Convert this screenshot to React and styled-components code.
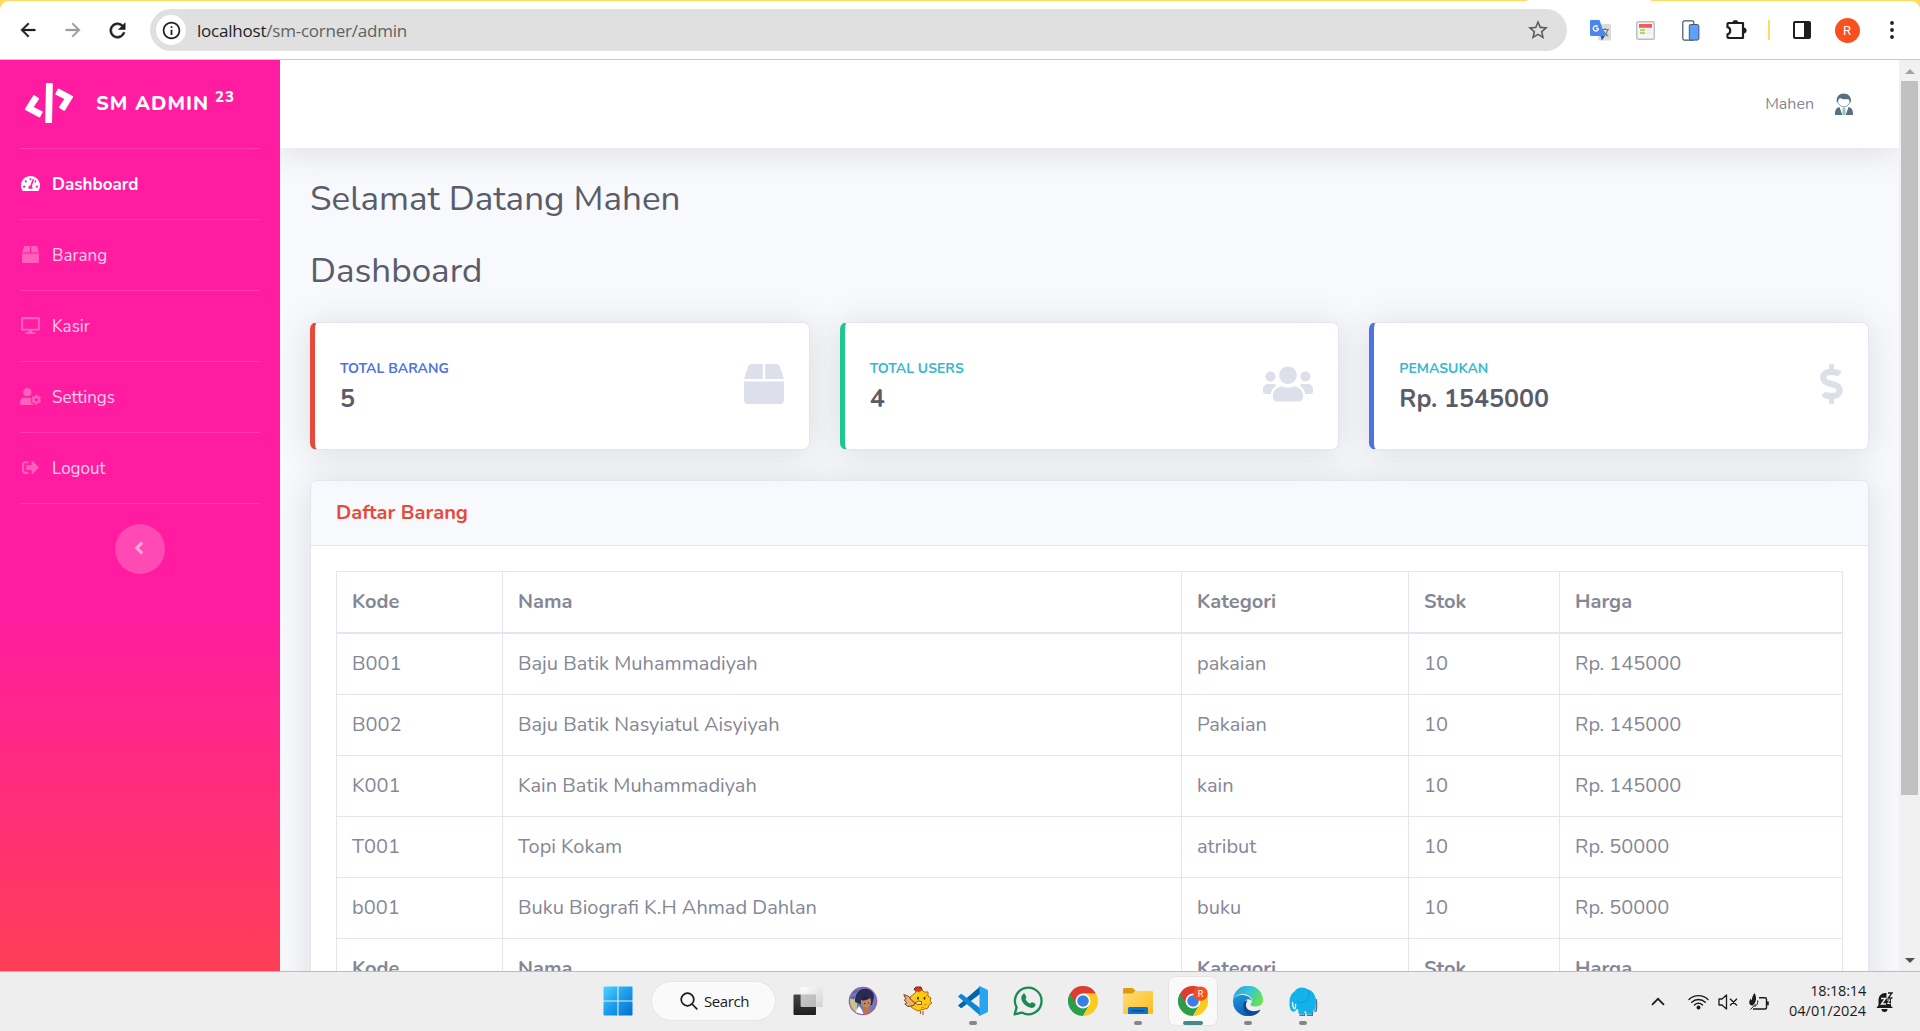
import React from "react";
import styled, { createGlobalStyle } from "styled-components";
import {
  FaTachometerAlt, FaBox, FaDesktop, FaUserCog, FaSignOutAlt, FaAngleLeft,
  FaUsers, FaDollarSign, FaCode,
} from "react-icons/fa";
import { MdArrowBack, MdArrowForward, MdRefresh, MdInfoOutline, MdStarBorder } from "react-icons/md";

const Global = createGlobalStyle`
  *, *::before, *::after { box-sizing: border-box; }
  body { margin: 0; overflow: hidden; background: #fff; }
  svg { display: block; flex: none; }
`;

const Screen = styled.div`
  width: 1920px;
  height: 1031px;
  display: flex;
  flex-direction: column;
  overflow: hidden;
  font-family: Nunito, Lato, "Noto Sans", sans-serif;
  font-size: 20px;
  color: #858796;
`;

/* ---------- Browser toolbar ---------- */
const TabStrip = styled.div`
  height: 60px;
  flex: none;
  background: linear-gradient(90deg, #ffdc5e 0 1527px, #fff 1527px 1651px, #ffdc5e 1651px);
  padding-top: 1px;
`;
const Toolbar = styled.div`
  height: 59px;
  background: #fff;
  border-bottom: 1px solid #c9c9c9;
  border-radius: 9px 9px 0 0;
  display: flex;
  align-items: center;
  padding: 0 5px 0 5px;
`;
const NavButton = styled.div`
  width: 45px;
  display: flex;
  justify-content: center;
  color: ${(p) => (p.$dim ? "#9b9c9e" : "#1f1f1f")};
  svg { stroke: none; }
  path:not([fill="none"]) { stroke: currentColor; stroke-width: ${(p) => p.$bold || 0.3}; }
`;
const Address = styled.div`
  width: 1417px;
  height: 42px;
  margin-left: 10px;
  border-radius: 21px;
  background: #e0e0e0;
  display: flex;
  align-items: center;
  padding: 0 17px 0 6px;
`;
const SiteInfo = styled.div`
  width: 30px;
  height: 30px;
  border-radius: 50%;
  background: #fff;
  color: #1f1f1f;
  display: flex;
  align-items: center;
  justify-content: center;
`;
const Url = styled.div`
  flex: 1;
  margin: 1px 0 0 11px;
  font: 400 17px/24px "Open Sans", "Noto Sans", sans-serif;
  letter-spacing: -0.22px;
  color: #5f6062;
  b { font-weight: 400; color: #1f1f1f; }
`;
const Extensions = styled.div`
  margin-left: 11px;
  display: flex;
  align-items: center;
`;
const ExtensionCell = styled.div`
  width: ${(p) => p.$w || 45}px;
  display: flex;
  justify-content: center;
`;
const Divider = styled.div`
  width: 2px;
  height: 20px;
  background: #ffdc5e;
`;
const Profile = styled.div`
  width: 25px;
  height: 25px;
  border-radius: 50%;
  background: #f8511d;
  color: #fff;
  font: 400 13px/25px Roboto, sans-serif;
  text-align: center;
`;

/* ---------- Page ---------- */
const Viewport = styled.div`
  height: 911px;
  flex: none;
  display: flex;
  overflow: hidden;
`;
const Sidebar = styled.div`
  width: 280px;
  height: 911px;
  flex: none;
  padding: 0 20px;
  background: linear-gradient(180deg, #ff1ca0 0, #ff1ca0 550px, #ff3e57 911px);
  color: #fff;
`;
const Brand = styled.div`
  height: 88px;
  display: flex;
  align-items: center;
  padding-left: 4px;
  svg { transform: rotate(-15deg); margin-top: -3px; }
`;
const BrandText = styled.div`
  margin: -1px 0 0 22px;
  font-weight: 800;
  font-size: 20px;
  letter-spacing: 1px;
  line-height: 30px;
  white-space: nowrap;
  display: flex;
  gap: 6px;
`;
const Sup = styled.span`
  font-size: 15px;
  line-height: 17px;
`;
const NavItem = styled.div`
  height: 71px;
  padding-top: 2px;
  border-top: 1px solid rgba(255, 255, 255, 0.15);
  display: flex;
  align-items: center;
  font-size: 17px;
  line-height: 24px;
  font-weight: ${(p) => (p.$active ? 700 : 400)};
  color: ${(p) => (p.$active ? "#fff" : "rgba(255,255,255,.8)")};
`;
const NavIcon = styled.span`
  width: 21px;
  margin: 0 11px 3px 0;
  display: flex;
  justify-content: center;
  color: ${(p) => (p.$active ? "#fff" : "rgba(255,255,255,.3)")};
`;
const SidebarFoot = styled.div`
  border-top: 1px solid rgba(255, 255, 255, 0.15);
  padding-top: 20px;
  display: flex;
  justify-content: center;
`;
const Toggle = styled.div`
  width: 50px;
  height: 50px;
  border-radius: 50%;
  background: rgba(255, 255, 255, 0.2);
  color: rgba(255, 255, 255, 0.5);
  display: flex;
  align-items: center;
  justify-content: center;
  padding: 0 2px 3px 0;
`;
const Content = styled.div`
  width: 1619px;
  height: 911px;
  flex: none;
  overflow: hidden;
  background: #f8f9fc;
`;
const Topbar = styled.div`
  height: 88px;
  background: #fff;
  box-shadow: 0 3px 35px rgba(58, 59, 69, 0.15);
  display: flex;
  align-items: center;
  justify-content: flex-end;
  padding-right: 46px;
  font-size: 16px;
  line-height: 24px;
`;
const UserName = styled.span`
  margin-right: 21px;
`;
const Main = styled.div`
  padding: 30px 30px 0;
`;
const Heading = styled.h1`
  margin: 0 0 30px;
  font-weight: 400;
  font-size: 35px;
  line-height: 42px;
  color: #5a5c69;
`;
const Cards = styled.div`
  display: grid;
  grid-template-columns: repeat(3, 1fr);
  gap: 30px;
`;
const StatCard = styled.div`
  height: 128px;
  background: #fff;
  border: 1px solid #e3e6f0;
  border-left: 5px solid ${(p) => p.$accent};
  border-radius: 7px;
  box-shadow: 0 3px 35px rgba(58, 59, 69, 0.15);
  display: flex;
  align-items: center;
  justify-content: space-between;
  padding: 0 25px 1px;
  color: #dddfeb;
  svg { width: ${(p) => p.$iconWidth}px; height: 40px; margin-bottom: 3px; }
`;
const StatLabel = styled.div`
  font-size: 14px;
  line-height: 21px;
  margin-bottom: 5px;
  font-weight: 700;
  color: ${(p) => p.$color};
`;
const StatValue = styled.div`
  font-size: 25px;
  line-height: 30px;
  font-weight: 700;
  color: #5a5c69;
`;
const Panel = styled.div`
  margin-top: 30px;
  height: 640px;
  background: #fff;
  border: 1px solid #e3e6f0;
  border-radius: 7px;
  box-shadow: 0 3px 35px rgba(58, 59, 69, 0.15);
`;
const PanelHead = styled.div`
  height: 65px;
  padding: 20px 25px 0;
  background: #f8f9fc;
  border-bottom: 1px solid #e3e6f0;
  border-radius: 6px 6px 0 0;
  font-weight: 700;
  font-size: 20px;
  line-height: 24px;
  color: #e74a3b;
`;
const Table = styled.div`
  margin: 25px 25px 0;
  border-left: 1px solid #e3e6f0;
  border-top: 1px solid #e3e6f0;
`;
const Row = styled.div`
  display: grid;
  grid-template-columns: 166px 679px 227px 151px 1fr;
  height: ${(p) => (p.$head ? 62 : 61)}px;
`;
const Cell = styled.div`
  border-right: 1px solid #e3e6f0;
  border-bottom: ${(p) => (p.$head ? 2 : 1)}px solid #e3e6f0;
  padding: 15px 15px 0;
  line-height: 30px;
  white-space: nowrap;
  font-weight: ${(p) => (p.$strong ? 700 : 400)};
`;
const Scrollbar = styled.div`
  width: 21px;
  background: #f1f1f1;
  display: flex;
  flex-direction: column;
  align-items: center;
  justify-content: space-between;
  padding: 9px 0 8px;
`;
const Thumb = styled.div`
  width: 17px;
  height: 714px;
  margin: 7px 0 auto;
  background: #c1c1c1;
`;
const Arrow = styled.div`
  border: 5px solid transparent;
  border-top-width: ${(p) => (p.$down ? 5 : 0)}px;
  border-bottom-width: ${(p) => (p.$down ? 0 : 5)}px;
  border-top-color: ${(p) => (p.$down ? "#505050" : "transparent")};
  border-bottom-color: ${(p) => (p.$down ? "transparent" : "#a3a3a3")};
`;

/* ---------- Taskbar ---------- */
const Taskbar = styled.div`
  height: 60px;
  flex: none;
  background: #eee;
  border-top: 1px solid #bcbcbf;
  display: flex;
  justify-content: space-between;
  font-family: "Open Sans", "Noto Sans", sans-serif;
  color: #1b1b1b;
`;
const Apps = styled.div`
  margin-left: 590px;
  display: flex;
`;
const AppSlot = styled.div`
  width: 55px;
  display: flex;
  flex-direction: column;
  align-items: center;
  padding-top: 5px;
`;
const Tile = styled.div`
  width: 48px;
  height: 48px;
  border-radius: 6px;
  display: flex;
  flex-direction: column;
  align-items: center;
  padding-top: 9px;
  background: ${(p) => (p.$active ? "#f9f9f9" : "transparent")};
  box-shadow: ${(p) => (p.$active ? "0 0 0 1px #e4e4e4" : "none")};
`;
const Mark = styled.div`
  margin-top: 5px;
  width: ${(p) => p.$w}px;
  height: 4px;
  border-radius: 2px;
  background: ${(p) => p.$color || "#868686"};
`;
const SearchBox = styled.div`
  width: 123px;
  height: 38px;
  margin: 10px 5px 0 7px;
  border-radius: 19px;
  background: #fafafa;
  box-shadow: 0 0 0 1px #e6e6e6;
  display: flex;
  align-items: center;
  padding-left: 28px;
  gap: 6px;
  font-size: 15px;
  line-height: 20px;
  letter-spacing: -0.4px;
`;
const Tray = styled.div`
  display: flex;
  align-items: center;
  padding-right: 26px;
`;
const TrayIcon = styled.div`
  width: ${(p) => p.$w}px;
  display: flex;
  justify-content: center;
`;
const Clock = styled.div`
  width: 87px;
  text-align: right;
  font-size: 14.5px;
  line-height: 20px;
  margin: 0 10px 1px 0;
`;
const ClockLine = styled.div`
  letter-spacing: ${(p) => p.$ls}px;
`;

/* ---------- Icons ---------- */
const TranslateIcon = () => (
  <svg width="21" height="21" viewBox="0 0 21 21">
    <rect x="8" y="4" width="13" height="16.5" rx="1.2" fill="#dcdcdc" />
    <path d="M11.5 9.5h7.5M15.2 8v1.5M17.7 9.5c-.6 3-2.4 5.300-5 6.500M13 10.500c1 2.500 2.800 4.500 5.300 5.500" stroke="#5f7d84" strokeWidth="1.200" fill="none" />
    <path d="M1.200 0h8.300l5.500 16H1.200A1.200 1.200 0 0 1 0 14.800V1.200A1.200 1.200 0 0 1 1.200 0z" fill="#4a86ee" />
    <path d="M10.500 16H15l-3.200 4.500z" fill="#3450b4" />
    <path d="M8.500 8.400H6M8.500 8.400A2.600 2.600 0 1 1 7.700 6.500" stroke="#fff" strokeWidth="1.300" fill="none" />
  </svg>
);
const NotesIcon = () => (
  <svg width="19" height="19" viewBox="0 0 19 19">
    <rect x=".7" y=".7" width="17.600" height="17.600" rx="1.500" fill="#f6f6f6" stroke="#bdbdbd" strokeWidth="1.400" />
    <rect x="3" y="3" width="13" height="3.800" fill="#f4595b" />
    <path d="M4 9h5M4 12h5" stroke="#8fd53c" strokeWidth="1.500" />
    <path d="M10.500 9H15M10.500 12H15" stroke="#e0e0e0" strokeWidth="1.200" />
  </svg>
);
const DevicesIcon = () => (
  <svg width="18" height="21" viewBox="0 0 18 21">
    <rect x=".8" y=".8" width="11" height="19.400" rx="1.800" fill="#fff" stroke="#46546f" strokeWidth="1.200" />
    <rect x="7.300" y="4.500" width="9.600" height="15.600" rx="1.600" fill="#5ca2fb" stroke="#46546f" strokeWidth="1" />
  </svg>
);
const PuzzleIcon = () => (
  <svg width="21" height="21" viewBox="0 0 21 21">
    <path d="M2.500 3H17v15H2.500a1 1 0 0 1-1-1v-2.700c1.700-.3 2.700-1.800 2.700-3.500S3.200 7.500 1.500 7.200V4a1 1 0 0 1 1-1z" fill="none" stroke="#1f1f1f" strokeWidth="2.200" strokeLinejoin="round" />
    <path d="M6.700 3a2.700 2.700 0 0 1 5.400 0zM17.600 7.800a2.700 2.700 0 0 1 0 5.400z" fill="#1f1f1f" stroke="#1f1f1f" strokeWidth=".6" />
  </svg>
);
const PanelIcon = () => (
  <svg width="18" height="18" viewBox="0 0 18 18">
    <rect x="1" y="1" width="16" height="16" rx="1" fill="none" stroke="#1f1f1f" strokeWidth="2" />
    <path d="M11 1h6v16h-6z" fill="#1f1f1f" />
  </svg>
);
const DotsIcon = () => (
  <svg width="4" height="18" viewBox="0 0 4 18" fill="#1f1f1f">
    <circle cx="2" cy="2" r="1.900" /><circle cx="2" cy="9" r="1.900" /><circle cx="2" cy="16" r="1.900" />
  </svg>
);
const UserAvatar = () => (
  <svg width="18" height="22" viewBox="0 0 18 22">
    <path d="M1.700 9C1.200 3.500 4.200.5 8.700.5S16.400 3.500 16 9l-1 .5c-.5-1.800-1-3-2-3.500-3 .6-6 .2-8-1-1.300 1-1.900 2.500-2 4.500z" fill="#586f80" />
    <path d="M2.700 8.500c.3 2.800 3 5.300 6.100 5.300s5.800-2.500 6.200-5.300" fill="none" stroke="#8798a4" strokeWidth=".9" />
    <path d="M0 22c0-4.500.7-7 4.500-8l2.800 8zM18 22c0-4.500-.7-7-4.500-8l-2.800 8z" fill="#586f80" />
    <path d="M7.700 14.500h2.500l.5 7.500H7.300z" fill="#8cc8b9" />
  </svg>
);
const WindowsIcon = () => (
  <svg width="30" height="30" viewBox="0 0 30 30">
    <defs>
      <linearGradient id="win" x1="0" y1="0" x2="1" y2="1">
        <stop offset="0" stopColor="#4fd3ff" /><stop offset=".5" stopColor="#1a9cec" /><stop offset="1" stopColor="#0270cf" />
      </linearGradient>
    </defs>
    <path d="M1.500.5H14.400v14H.5v-13a1 1 0 0 1 1-1zM15.500.5H28.500a1 1 0 0 1 1 1v13h-14zM.5 15.600h13.900v13.900H1.500a1 1 0 0 1-1-1zM15.500 15.600h14v12.900a1 1 0 0 1-1 1h-13z" fill="url(#win)" />
  </svg>
);
const SearchIcon = () => (
  <svg width="18" height="18" viewBox="0 0 18 18" fill="none" stroke="#1b1b1b" strokeWidth="1.700">
    <circle cx="7.500" cy="7.500" r="6.300" /><path d="M12 12l5.300 5.300" />
  </svg>
);
const TaskViewIcon = () => (
  <svg width="30" height="30" viewBox="0 0 30 30">
    <defs>
      <linearGradient id="tv" x1="0" y1="0" x2="1" y2="1">
        <stop offset="0" stopColor="#fff" /><stop offset="1" stopColor="#cfcfcf" />
      </linearGradient>
      <linearGradient id="tvd" x1="0" y1="0" x2="0" y2="1">
        <stop offset="0" stopColor="#454543" /><stop offset="1" stopColor="#1e1e1e" />
      </linearGradient>
    </defs>
    <rect x=".5" y="8.500" width="22.500" height="20.500" rx="1" fill="url(#tvd)" />
    <rect x="7.700" y="1" width="22" height="20" rx="1" fill="url(#tv)" opacity=".88" />
    <path d="M7.700 8.500H23V21H8.700a1 1 0 0 1-1-1z" fill="#aaa" opacity=".45" />
  </svg>
);
const PortraitIcon = () => (
  <svg width="30" height="30" viewBox="0 0 30 30">
    <defs><clipPath id="pc"><circle cx="15" cy="15" r="13" /></clipPath></defs>
    <circle cx="15" cy="15" r="14.300" fill="#9b62a4" />
    <g clipPath="url(#pc)">
      <path d="M0 0h30v30H0z" fill="#6d7cb8" />
      <path d="M0 12l9 2v16H0z" fill="#c9c48e" />
      <path d="M15 3c7-2 11 2 11 8l-2 8-7 1-10-4C7 10 9 4 15 3z" fill="#2a2b55" />
      <path d="M13 14c4 0 6-2 9-3 2 5 1 9-3 11-4 0-7-3-6-8z" fill="#c4855a" />
      <path d="M14 11c5 0 7-1 9 2l-2-.5c-3 2-5 2-7 2z" fill="#1f2348" />
      <path d="M16 17.500h1.500M20 17h1.200" stroke="#4a2a22" strokeWidth="1" />
      <path d="M16 21l6 2 3 7H14z" fill="#b97648" />
      <path d="M8 25l3-5 3 4 2 6H7z" fill="#fff" />
      <path d="M4 7l5-2M3 12l5-1" stroke="#4563a8" strokeWidth="1.500" />
    </g>
  </svg>
);
const ChickenIcon = () => (
  <svg width="30" height="30" viewBox="0 0 30 30">
    <path d="M11 3l2-2h5l2 5-5 2z" fill="#d53a22" stroke="#6d2412" strokeWidth="1" />
    <path d="M11 8l3-3 2 1 3-2 2 2h4v4l3 2-1 3 2 2-3 2-1 3-3 1-4 1-3 1-4-2-3-2-1-4V11z" fill="#fbca13" stroke="#b66b08" strokeWidth="1" />
    <path d="M.8 8.500l5 2 3 4 3 2-1 3-6 1-3-2.500 2-1-2.500-3 1.500-1z" fill="#e9b078" stroke="#7b431e" strokeWidth="1" />
    <path d="M11.500 17l4-2 3 .5v3h-4z" fill="#f5e1a0" stroke="#9c520c" strokeWidth="1" />
    <path d="M15 11v2.500M21.500 11v2.500" stroke="#43260c" strokeWidth="1.600" />
    <path d="M17.500 25v3M20 25v4" stroke="#c26711" strokeWidth="1.200" fill="none" />
    <path d="M21 19l3-1M18 22l3-1M23 9l1 1" stroke="#d99308" strokeWidth="1.200" />
  </svg>
);
const VsCodeIcon = () => (
  <svg width="30" height="30" viewBox="0 0 30 30">
    <path d="M0 19.500L22 .6V8L4 21.700c-.5.4-1.100.4-1.600 0z" fill="#0065a9" />
    <path d="M0 10.500l2.400-2.200c.5-.4 1.100-.4 1.600 0L22 22v7.500z" fill="#0f86d2" />
    <path d="M22 .3l7 3.200c.6.300 1 .9 1 1.500v20c0 .6-.4 1.200-1 1.500l-7 3.200c-.6.200-1.200 0-1.500-.5l1-.7V1.500l-1-.7c.3-.500.900-.7 1.500-.5z" fill="#27a4f2" />
  </svg>
);
const WhatsAppIcon = () => (
  <svg width="30" height="30" viewBox="0 0 30 30">
    <path d="M1.600 28.400l2-7A13.300 13.300 0 1 1 8.800 26.600z" fill="none" stroke="#1d8a56" strokeWidth="2.300" strokeLinejoin="round" />
    <path d="M10.300 7.800c.7-.6 1.500-.3 1.800.4l1.200 2.700c.2.500 0 1-.9 2 1 2.200 2.700 3.800 5 4.700 1-1.100 1.500-1.600 2-1.400l2.600 1.300c.6.300.7.700.4 1.700-.6 2-2.500 3-4.600 2.600-4.800-1-8.800-4.800-9.500-9-.2-2 .6-3.900 2-5z" fill="#1d8a56" />
  </svg>
);
const ChromeIcon = ({ badge }) => (
  <svg width="30" height="30" viewBox="0 0 30 30">
    <path d="M15 15L2 7.500A15 15 0 0 0 15 30l6.500-11.250z" fill="#2a9e48" />
    <path d="M15 15h-2l8.500 3.750L15 30A15 15 0 0 0 28 7.500H15z" fill="#fdcb1e" />
    <path d="M15 7.500H28A15 15 0 0 0 2 7.500l6.500 11.250z" fill="#de3c30" />
    <circle cx="15" cy="15" r="7.500" fill="#fff" /><circle cx="15" cy="15" r="5.800" fill="#3a7ee8" />
    {badge && <circle cx="22.500" cy="7.700" r="7.300" fill="#f6511d" />}
    {badge && <text x="22.500" y="11" fontFamily="Roboto, sans-serif" fontSize="9" fill="#fff" textAnchor="middle">R</text>}
  </svg>
);
const FolderIcon = () => (
  <svg width="30" height="30" viewBox="0 0 30 30">
    <defs>
      <linearGradient id="fo" x1="0" y1="0" x2="1" y2="1">
        <stop offset="0" stopColor="#ffdf76" /><stop offset="1" stopColor="#fdbb1c" />
      </linearGradient>
    </defs>
    <path d="M0 3.500A1.500 1.500 0 0 1 1.500 2H9c1.500 0 2.500 2.500 4 3h7v5H0z" fill="#dd9a0b" />
    <path d="M0 7.500h9.500L12 5h17a1 1 0 0 1 1 1v21a1 1 0 0 1-1 1H1a1 1 0 0 1-1-1z" fill="url(#fo)" />
    <path d="M5 28v-5.500A1.500 1.500 0 0 1 6.500 21h17a1.500 1.500 0 0 1 1.500 1.500V28z" fill="#0b74cf" />
    <path d="M8.500 24.800h13" stroke="#064a8d" strokeWidth="1.300" />
  </svg>
);
const EdgeIcon = () => (
  <svg width="30" height="30" viewBox="0 0 30 30">
    <defs>
      <linearGradient id="eg" x1="0" y1=".2" x2="1" y2=".6">
        <stop offset="0" stopColor="#2aa4dc" /><stop offset=".5" stopColor="#36c5d8" /><stop offset="1" stopColor="#6be34a" />
      </linearGradient>
      <linearGradient id="eb" x1="0" y1="0" x2=".4" y2="1">
        <stop offset="0" stopColor="#1b9be0" /><stop offset="1" stopColor="#0f5fb5" />
      </linearGradient>
    </defs>
    <path d="M0 15A15 15 0 0 1 30 14c0 4.500-3.500 6.500-7.500 6.500-3.500 0-5-1-5-2s1.500-1.500 1.500-4c0-3-4-6.500-9-6.500S0 11 0 15z" fill="url(#eg)" />
    <path d="M0 15C0 11 5 8.500 10 9c5 .5 8 3 8.500 6-1-1.500-3-2-4.500-1.500-4 1.500-4.500 6-2.500 9.500 2 4 7 5.500 12 4.500A15 15 0 0 1 0 15z" fill="url(#eb)" />
    <path d="M10.500 16.500c-1.500 5 1 13 8 13 4 0 7.500-2.500 9-6-6 3-14 2-14.500-4-.1-2 .5-3.500 1.500-5-2 0-3.400.5-4 2z" fill="#0d4a94" />
  </svg>
);
const ElephantIcon = () => (
  <svg width="30" height="30" viewBox="0 0 30 30">
    <path d="M28 13c1 3 .8 8 .3 12l-2 .5M25 22l-.6 7.300h-5.500M16.500 27v2.300h-5" fill="none" stroke="#5a6e78" strokeWidth="1.200" />
    <path d="M6.500 5.500C9 1 16 0 20 3.500c5 1 8 6 8 12.500l-.5 8.500h-1.700L25 22l-.7 6.500h-6V25.500h-1.800v3H11L10 23.500c-.5-1-1.500-.5-2 .5-.8 1.300-2 2-3.500 1.500-2.500-1-3-5-3-9.500S3.500 7 6.500 5.500z" fill="#14b2ea" />
    <path d="M20 4c2 3 1 9-2 11-4 3-8.500 1.500-9-1" fill="none" stroke="#0d9cd6" strokeWidth="1" />
    <path d="M4.500 16c0 3 .4 5.800 2.200 6.800 1-1.300 1.200-2.800.8-5" fill="none" stroke="#fff" strokeWidth="1.300" />
  </svg>
);
const CaretUp = () => (
  <svg width="14" height="9" viewBox="0 0 14 9"><path d="M1 7.800l6-6 6 6" fill="none" stroke="#1b1b1b" strokeWidth="1.700" /></svg>
);
const WifiIcon = () => (
  <svg width="21" height="16" viewBox="0 0 21 16" fill="none" stroke="#1b1b1b" strokeWidth="1.400" strokeLinecap="round">
    <path d="M1 5.500a13.500 13.500 0 0 1 19 0M3.700 8.300a9.600 9.600 0 0 1 13.600 0M6.500 11a5.600 5.600 0 0 1 8 0" />
    <circle cx="10.500" cy="13.500" r="1.300" fill="#1b1b1b" />
  </svg>
);
const MutedIcon = () => (
  <svg width="20" height="16" viewBox="0 0 20 16" fill="none" stroke="#1b1b1b" strokeWidth="1.300" strokeLinejoin="round">
    <path d="M1 5h3l4.500-4v14L4 11H1zM12 4.700l7 6.800M19 4.700l-7 6.800" />
  </svg>
);
const BatteryIcon = () => (
  <svg width="20" height="18" viewBox="0 0 20 18">
    <path d="M10 4.700H16a1.500 1.500 0 0 1 1.500 1.500v8.300A1.500 1.500 0 0 1 16 16H4" fill="none" stroke="#1b1b1b" strokeWidth="1.400" />
    <path d="M18 8.500h1.800v3.800H18z" fill="#1b1b1b" />
    <path d="M5.500 0C7.300 3 7.500 6 6.500 8.500c-.6 1.800-1.800 3.200-3 4C1.500 12.500.3 11.500.3 10 .2 8 .8 6.500 2 5.500c0 1 .3 1.500.8 2C3 4 4 2 5.500 0z" fill="#1b1b1b" />
    <path d="M1.500 16.500L6.500 11M8.700 7.500c.3 3-.7 5-3.200 6" fill="none" stroke="#1b1b1b" strokeWidth="1" />
  </svg>
);
const BellIcon = () => (
  <svg width="18" height="21" viewBox="0 0 18 21">
    <path d="M2.500 14V8.500A6.500 6.500 0 0 1 9 2h6v13l2 2H.5z" fill="#1b1b1b" />
    <path d="M5.500 18h6a3 3 0 0 1-6 0z" fill="#1b1b1b" />
    <path d="M5 7.500h4.500L5.500 13H10" fill="none" stroke="#eee" strokeWidth="1.400" />
    <path d="M10.500 1h7.500v7h-7.500z" fill="#eee" />
    <path d="M12 2h4l-3.800 5h4.300" fill="none" stroke="#1b1b1b" strokeWidth="1.300" />
    <path d="M11 9h3l-2.500 3.500h3" fill="none" stroke="#eee" strokeWidth="1" />
  </svg>
);

/* ---------- Data ---------- */
const nav = [
  { label: "Dashboard", Icon: FaTachometerAlt, size: 19, active: true },
  { label: "Barang", Icon: FaBox, size: 17 },
  { label: "Kasir", Icon: FaDesktop, size: 19 },
  { label: "Settings", Icon: FaUserCog, size: 21 },
  { label: "Logout", Icon: FaSignOutAlt, size: 17 },
];
const stats = [
  { label: "TOTAL BARANG", value: "5", accent: "#e74a3b", color: "#4e73df", Icon: FaBox, iconWidth: 40 },
  { label: "TOTAL USERS", value: "4", accent: "#1cc88a", color: "#36b9cc", Icon: FaUsers, iconWidth: 50 },
  { label: "PEMASUKAN", value: "Rp. 1545000", accent: "#4e73df", color: "#36b9cc", Icon: FaDollarSign, iconWidth: 23 },
];
const columns = ["Kode", "Nama", "Kategori", "Stok", "Harga"];
const rows = [
  ["B001", "Baju Batik Muhammadiyah", "pakaian", "10", "Rp. 145000"],
  ["B002", "Baju Batik Nasyiatul Aisyiyah", "Pakaian", "10", "Rp. 145000"],
  ["K001", "Kain Batik Muhammadiyah", "kain", "10", "Rp. 145000"],
  ["T001", "Topi Kokam", "atribut", "10", "Rp. 50000"],
  ["b001", "Buku Biografi K.H Ahmad Dahlan", "buku", "10", "Rp. 50000"],
];
const apps = [
  { Icon: TaskViewIcon }, { Icon: PortraitIcon }, { Icon: ChickenIcon },
  { Icon: VsCodeIcon, open: true }, { Icon: WhatsAppIcon }, { Icon: ChromeIcon },
  { Icon: FolderIcon, open: true }, { Icon: ChromeIcon, active: true },
  { Icon: EdgeIcon, open: true }, { Icon: ElephantIcon, open: true },
];

export default function App() {
  return (
    <Screen>
      <Global />
      <TabStrip>
        <Toolbar>
          <NavButton><MdArrowBack size={22} /></NavButton>
          <NavButton $dim><MdArrowForward size={22} /></NavButton>
          <NavButton $bold={0.6}><MdRefresh size={23} /></NavButton>
          <Address>
            <SiteInfo><MdInfoOutline size={21} /></SiteInfo>
            <Url><b>localhost</b>/sm-corner/admin</Url>
            <MdStarBorder size={24} color="#5c5d5f" />
          </Address>
          <Extensions>
            <ExtensionCell><TranslateIcon /></ExtensionCell>
            <ExtensionCell><NotesIcon /></ExtensionCell>
            <ExtensionCell><DevicesIcon /></ExtensionCell>
            <ExtensionCell $w={46}><PuzzleIcon /></ExtensionCell>
            <ExtensionCell $w={20}><Divider /></ExtensionCell>
            <ExtensionCell $w={45}><PanelIcon /></ExtensionCell>
            <ExtensionCell $w={46}><Profile>R</Profile></ExtensionCell>
            <ExtensionCell $w={44}><DotsIcon /></ExtensionCell>
          </Extensions>
        </Toolbar>
      </TabStrip>
      <Viewport>
        <Sidebar>
          <Brand>
            <FaCode size={50} />
            <BrandText>SM ADMIN <Sup>23</Sup></BrandText>
          </Brand>
          {nav.map(({ label, Icon, size, active }) => (
            <NavItem key={label} $active={active}>
              <NavIcon $active={active}><Icon size={size} /></NavIcon>
              {label}
            </NavItem>
          ))}
          <SidebarFoot><Toggle><FaAngleLeft size={20} /></Toggle></SidebarFoot>
        </Sidebar>
        <Content>
          <Topbar><UserName>Mahen</UserName><UserAvatar /></Topbar>
          <Main>
            <Heading>Selamat Datang Mahen</Heading>
            <Heading>Dashboard</Heading>
            <Cards>
              {stats.map(({ label, value, accent, color, Icon, iconWidth }) => (
                <StatCard key={label} $accent={accent} $iconWidth={iconWidth}>
                  <div>
                    <StatLabel $color={color}>{label}</StatLabel>
                    <StatValue>{value}</StatValue>
                  </div>
                  <Icon />
                </StatCard>
              ))}
            </Cards>
            <Panel>
              <PanelHead>Daftar Barang</PanelHead>
              <Table>
                <Row $head>{columns.map((c) => <Cell key={c} $head $strong>{c}</Cell>)}</Row>
                {rows.map((r) => (
                  <Row key={r[0]}>{r.map((c, i) => <Cell key={i}>{c}</Cell>)}</Row>
                ))}
                <Row>{columns.map((c) => <Cell key={c} $strong>{c}</Cell>)}</Row>
              </Table>
            </Panel>
          </Main>
        </Content>
        <Scrollbar><Arrow /><Thumb /><Arrow $down /></Scrollbar>
      </Viewport>
      <Taskbar>
        <Apps>
          <AppSlot><Tile><WindowsIcon /></Tile></AppSlot>
          <SearchBox><SearchIcon />Search</SearchBox>
          {apps.map(({ Icon, open, active }, i) => (
            <AppSlot key={i}>
              <Tile $active={active}>
                <Icon badge={active} />
                {open && <Mark $w={8} />}
                {active && <Mark $w={20} $color="#468a87" />}
              </Tile>
            </AppSlot>
          ))}
        </Apps>
        <Tray>
          <TrayIcon $w={40}><CaretUp /></TrayIcon>
          <TrayIcon $w={40}><WifiIcon /></TrayIcon>
          <TrayIcon $w={20}><MutedIcon /></TrayIcon>
          <TrayIcon $w={41}><BatteryIcon /></TrayIcon>
          <Clock>
            <ClockLine $ls={-0.2}>18:18:14</ClockLine>
            <ClockLine $ls={0}>04/01/2024</ClockLine>
          </Clock>
          <BellIcon />
        </Tray>
      </Taskbar>
    </Screen>
  );
}
